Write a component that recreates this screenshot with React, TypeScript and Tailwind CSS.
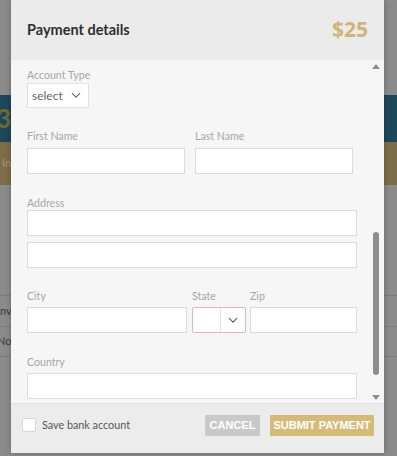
import React from 'react';

const Chevron: React.FC<{ className?: string }> = ({ className }) => (
  <svg className={className} viewBox="0 0 12 8" fill="none" stroke="currentColor" strokeWidth={1.3}>
    <path d="M1.5 1.5L6 6l4.5-4.5" strokeLinecap="round" strokeLinejoin="round" />
  </svg>
);

const Label: React.FC<{ children: React.ReactNode; className?: string }> = ({ children, className = '' }) => (
  <div className={`text-[10.6px] leading-[14px] text-[#a6a6a6] ${className}`}>{children}</div>
);

const Input: React.FC<{ className?: string }> = ({ className = '' }) => (
  <div className={`h-[26px] bg-white border border-[#dcdcdc] ${className}`} />
);

const App: React.FC = () => {
  return (
    <div className="relative w-[397px] h-[456px] overflow-hidden bg-[#8b8b8b] font-['Lato','Open_Sans',sans-serif]">
      {/* page behind the overlay */}
      <div className="absolute inset-0 flex flex-col">
        <div className="h-[95px]" />
        <div className="h-[47px] bg-[#1e475a] flex items-center">
          <span className="ml-[-4px] text-[26px] font-bold text-[#6f6a35]">3</span>
        </div>
        <div className="h-[43px] bg-[#7d6d48] flex items-center">
          <span className="ml-[2px] text-[11px] text-[#a4987a]">In</span>
        </div>
        <div className="h-[110px]" />
        <div className="h-[32px] border-t border-b border-[#7c7c7c] flex items-center">
          <span className="ml-[-3px] text-[11px] text-[#3a3a3a]">Inv</span>
        </div>
        <div className="h-[30px] border-b border-[#7c7c7c] flex items-center">
          <span className="ml-[-3px] text-[11px] text-[#3a3a3a]">Nor</span>
        </div>
      </div>

      {/* modal */}
      <div className="absolute left-[11px] top-0 w-[373px] h-[453px] flex flex-col shadow-[0_0_6px_rgba(0,0,0,0.25)]">
        <div className="h-[60px] bg-[#ebebeb] flex items-center justify-between pl-[16px] pr-[16px]">
          <span className="text-[14.5px] font-bold text-[#2f2f2f]">Payment details</span>
          <span className="text-[21px] font-bold text-[#cfb57a] font-['Open_Sans',sans-serif]">$25</span>
        </div>

        <div className="h-[343px] bg-[#f6f6f6] flex">
          <div className="flex-1 pl-[16px] pt-[8px]">
            <Label>Account Type</Label>
            <div className="mt-[1px] w-[62px] h-[25px] bg-white border border-[#e2e2e2] flex items-center justify-between pl-[4px] pr-[7px]">
              <span className="text-[12px] text-[#666]">select</span>
              <Chevron className="w-[10px] h-[7px] text-[#666]" />
            </div>

            <div className="mt-[21px] flex gap-[10px]">
              <div className="w-[158px]">
                <Label>First Name</Label>
                <Input className="mt-[5px]" />
              </div>
              <div className="w-[158px]">
                <Label>Last Name</Label>
                <Input className="mt-[5px]" />
              </div>
            </div>

            <Label className="mt-[22px]">Address</Label>
            <Input className="w-[330px]" />
            <Input className="w-[330px] mt-[6px]" />

            <div className="mt-[21px] flex">
              <div className="w-[160px]">
                <Label>City</Label>
                <Input className="mt-[4px]" />
              </div>
              <div className="w-[54px] ml-[5px]">
                <Label>State</Label>
                <div className="mt-[4px] h-[26px] bg-white border border-[#dcb9c0] rounded-[2px] flex">
                  <div className="w-[28px] border-r border-[#e3e3e3]" />
                  <div className="flex-1 flex items-center justify-center">
                    <Chevron className="w-[10px] h-[7px] text-[#555]" />
                  </div>
                </div>
              </div>
              <div className="w-[107px] ml-[4px]">
                <Label>Zip</Label>
                <Input className="mt-[4px]" />
              </div>
            </div>

            <Label className="mt-[22px]">Country</Label>
            <Input className="w-[330px] mt-[4px]" />
          </div>

          {/* scrollbar */}
          <div className="w-[13px] mr-[2px] flex flex-col items-center pt-[4px] pb-[3px]">
            <div className="w-0 h-0 border-l-[4px] border-r-[4px] border-b-[5px] border-l-transparent border-r-transparent border-b-[#8f8f8f]" />
            <div className="flex-1 w-full flex flex-col items-center">
              <div className="h-[163px]" />
              <div className="w-[6px] h-[143px] rounded-full bg-[#8e8e8e]" />
            </div>
            <div className="w-0 h-0 border-l-[4px] border-r-[4px] border-t-[5px] border-l-transparent border-r-transparent border-t-[#8f8f8f]" />
          </div>
        </div>

        <div className="h-[50px] bg-[#ececec] border-t border-[#e0e0e0] flex items-start pt-[11px] pl-[11px] pr-[10px]">
          <div className="flex items-center mt-[2px]">
            <div className="w-[14px] h-[14px] bg-white border border-[#d8d8d8] rounded-[2px]" />
            <span className="ml-[6px] text-[10.8px] text-[#555]">Save bank account</span>
          </div>
          <div className="ml-auto flex gap-[10px]">
            <button className="w-[55px] h-[21px] bg-[#c9c9c9] text-white text-[11px] font-bold font-['Liberation_Sans',sans-serif] rounded-[1px]">
              CANCEL
            </button>
            <button className="w-[104px] h-[21px] bg-[#d5bb79] text-white text-[11px] font-bold font-['Liberation_Sans',sans-serif] rounded-[1px]">
              SUBMIT PAYMENT
            </button>
          </div>
        </div>
      </div>
    </div>
  );
};

export default App;
